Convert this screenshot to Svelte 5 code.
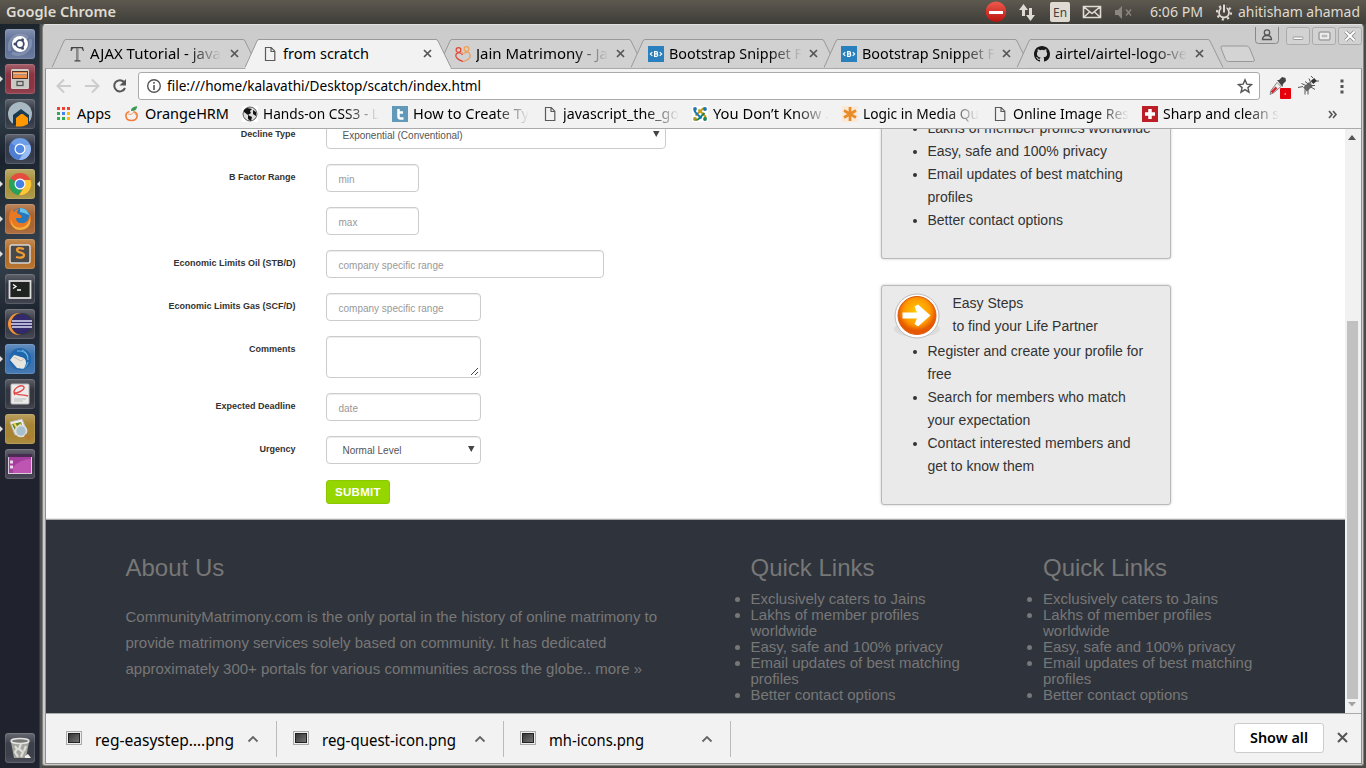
<script>
  const launcher = [
    { id: 'ubuntu', bg: '#62739a' },
    { id: 'files', bg: '#8b3442', run: true },
    { id: 'house', bg: '#343a46' },
    { id: 'chromium', bg: '#343a49' },
    { id: 'chrome', bg: '#a8943f', run: true, active: true },
    { id: 'firefox', bg: '#a86432', run: true },
    { id: 'sublime', bg: '#b36d27', run: true },
    { id: 'terminal', bg: '#343843' },
    { id: 'eclipse', bg: '#3a3d49' },
    { id: 'thunderbird', bg: '#3b71ae', run: true },
    { id: 'document', bg: '#343640' },
    { id: 'viewer', bg: '#a68434', run: true },
    { id: 'windowapp', bg: '#3c3b4b' }
  ];
  const tabs = [
    { icon: 'tee', text: 'AJAX Tutorial - java', w: 131, fade: true },
    { icon: 'page', text: 'from scratch', w: 86, active: true },
    { icon: 'hearts', text: 'Jain Matrimony - Ja', w: 132, fade: true },
    { icon: 'snippet', text: 'Bootstrap Snippet F', w: 133, fade: true },
    { icon: 'snippet', text: 'Bootstrap Snippet F', w: 133, fade: true },
    { icon: 'github', text: 'airtel/airtel-logo-ve', w: 132, fade: true }
  ];
  const bookmarks = [
    { icon: 'apps', text: 'Apps', w: 34 },
    { icon: 'orange', text: 'OrangeHRM', w: 84 },
    { icon: 'globe', text: 'Hands-on CSS3 - L', w: 116, fade: true },
    { icon: 'tumble', text: 'How to Create Ty', w: 116, fade: true },
    { icon: 'page', text: 'javascript_the_go', w: 116, fade: true },
    { icon: 'joomla', text: 'You Don’t Know .', w: 116, fade: true },
    { icon: 'star', text: 'Logic in Media Qu', w: 116, fade: true },
    { icon: 'page', text: 'Online Image Res', w: 116, fade: true },
    { icon: 'cross', text: 'Sharp and clean s', w: 116, fade: true }
  ];
  const downloads = [
    { text: 'reg-easystep….png', w: 139 },
    { text: 'reg-quest-icon.png', w: 134 },
    { text: 'mh-icons.png', w: 95 }
  ];
  const fields = [
    { label: 'Decline Type', kind: 'select', value: 'Exponential (Conventional)', w: 340 },
    { label: 'B Factor Range', value: 'min', w: 93 },
    { label: '', value: 'max', w: 93 },
    { label: 'Economic Limits Oil (STB/D)', value: 'company specific range', w: 278 },
    { label: 'Economic Limits Gas (SCF/D)', value: 'company specific range', w: 155 },
    { label: 'Comments', kind: 'area', w: 155 },
    { label: 'Expected Deadline', value: 'date', w: 155 },
    { label: 'Urgency', kind: 'select', value: 'Normal Level', w: 155 }
  ];
  const quick = ['Exclusively caters to Jains', 'Lakhs of member profiles worldwide', 'Easy, safe and 100% privacy', 'Email updates of best matching profiles', 'Better contact options'];
</script>

{#snippet label(text, w, size = 14.4, fade = false, bold = false)}
  <svg class="fit" class:fade class:bold width={w} height="20" font-size={size}>
    <text x="0" y="15" textLength={w} lengthAdjust="spacingAndGlyphs">{text}</text>
  </svg>
{/snippet}

{#snippet close()}
  <svg class="close" width="9" height="9" viewBox="0 0 9 9"><path d="M1 1 8 8M8 1 1 8" stroke="#555" stroke-width="1.7" /></svg>
{/snippet}

{#snippet icon(id)}
  <svg class="ico" width="16" height="16" viewBox="0 0 16 16" fill="none">
    {#if id === 'tee'}
      <path d="M2 1h12l1 4h-1l-1.5-2.8H9.3V14l2.200.6v.9h-6v-.9l2-.6V2.200H4L2.500 5h-1z" fill="#444" />
      <path d="M8.800 2v12.500" stroke="#aaa" />
    {:else if id === 'page'}
      <path d="M3.500 1.500h5.700l3.600 3.700v9.300H3.500zM9 1.700v3.800h3.800" stroke="#5a5a5a" stroke-width="1.200" />
    {:else if id === 'hearts'}
      <circle cx="3.500" cy="4" r="2.400" stroke="#e5432e" stroke-width="1.200" /><circle cx="11.500" cy="3" r="2.400" stroke="#f5a04c" stroke-width="1.200" />
      <path d="M7.500 9C5 5 0 7 1 10.500c1 3 4 4 7 5" stroke="#e5432e" stroke-width="1.200" />
      <path d="M6 6.500c3 2 4 0 6-.5 3 0 4 4 2 6.500-1 1.500-4 2.500-6 3" stroke="#f5964c" stroke-width="1.200" />
    {:else if id === 'snippet'}
      <rect width="16" height="16" fill="#2a80bd" />
      <path d="M4.300 6.200 2.300 8l2 1.800M11.700 6.200l2 1.800-2 1.800" stroke="#fff" stroke-width="1.100" />
      <path d="M6.600 5.600h1.700q1.200 0 1.200 1.100T8.300 7.900H6.600h1.900q1.300 0 1.300 1.200t-1.300 1.300H6.600z" stroke="#fff" stroke-width="1.200" />
    {:else if id === 'github'}
      <path fill="#191717" d="M8 0C3.580 0 0 3.580 0 8c0 3.540 2.290 6.530 5.470 7.590.4.070.550-.170.550-.380v-1.490c-2.010.370-2.530-.490-2.690-.940-.090-.230-.480-.940-.820-1.130-.280-.150-.680-.520-.010-.530.630-.010 1.080.580 1.230.820.720 1.210 1.870.870 2.330.660.070-.520.280-.870.510-1.070-1.780-.200-3.640-.890-3.640-3.950 0-.870.310-1.590.820-2.150-.080-.200-.360-1.020.080-2.120 0 0 .670-.210 2.200.820a7.600 7.600 0 0 1 4 0c1.530-1.040 2.200-.820 2.200-.820.440 1.100.160 1.920.080 2.120.510.560.820 1.270.820 2.150 0 3.070-1.870 3.750-3.650 3.950.290.250.540.730.540 1.480v2.200c0 .210.150.460.550.380A8 8 0 0 0 16 8c0-4.420-3.580-8-8-8z" />
    {:else if id === 'apps'}
      {#each [0, 1, 2] as r}
        {#each [0, 1, 2] as c}
          <rect x={1 + c * 5} y={1 + r * 5} width="3" height="3" fill={[['#ea4335', '#ea4335', '#ea4335'], ['#34a853', '#4285f4', '#fbbc05'], ['#34a853', '#34a853', '#fbbc05']][r][c]} />
        {/each}
      {/each}
    {:else if id === 'orange'}
      <path d="M5.500 5.500C0 7 1 14.500 7.500 14.500S15 7 9.500 5.800" stroke="#f27c36" stroke-width="1.600" /><path d="M4 8q3 2 6-2l2 3" stroke="#f6a36b" />
      <path d="M7 5C7 2 9 1 13 0c0 4-2 5-6 5z" fill="#3a9a55" />
    {:else if id === 'globe'}
      <rect width="16" height="16" fill="#fff" /><circle cx="8" cy="8" r="7" fill="#ddd" stroke="#555" />
      <path d="m2 4 3-2 5 1-2 2 1 2-3 2-4-3zm9 0 3 2v4l-3-2zM6 9l4 2-1 4-3-2z" fill="#111" />
    {:else if id === 'tumble'}
      <rect width="16" height="16" fill="#6299b8" /><path d="M6.500 3v7.500q0 2 2 2H11.500M6.500 6.500H11" stroke="#fff" stroke-width="2.500" />
    {:else if id === 'joomla'}
      <rect width="16" height="16" fill="#fff" />
      <g stroke-width="1.900"><path d="M3.500 9.500 10 3.500q2-2 3.500-.5" stroke="#b69a18" /><path d="m6.500 3.500 6 6q2 2 .5 3.500" stroke="#c89c12" /><path d="m12.500 7-6 6q-2 1.500-3.500 0" stroke="#17845b" /><path d="m9.500 12.500-6-6Q2 4.500 3 3" stroke="#1a75b8" /></g>
      <circle cx="3" cy="3" r="1.900" fill="#2477ad" /><circle cx="13" cy="3" r="1.900" fill="#1a75b8" /><circle cx="3" cy="13" r="1.900" fill="#ad9421" /><circle cx="13" cy="13" r="1.900" fill="#17845b" />
    {:else if id === 'star'}
      <rect width="16" height="16" fill="#fbe9d8" /><path d="M8 1v14M2 4.500l12 7M14 4.500l-12 7" stroke="#e98b27" stroke-width="2.700" />
    {:else if id === 'cross'}
      <rect width="16" height="16" fill="#bb1e27" /><path d="M8 3v10M3 8h10" stroke="#fff" stroke-width="3.500" />
    {/if}
  </svg>
{/snippet}

{#snippet tile(id)}
  <svg width="26" height="26" viewBox="0 0 26 26" fill="none">
    {#if id === 'ubuntu'}
      <path d="M3 20C-1 8 12-1 21 7M5 22c12 5 21-5 18-14" stroke="#9ba7c0" stroke-width="3" opacity=".5" />
      <circle cx="13" cy="13" r="8" fill="#fff" /><circle cx="13" cy="13" r="3.800" stroke="#3e4b6b" stroke-width="1.800" />
      <circle cx="8" cy="13" r="1.500" fill="#3e4b6b" /><circle cx="15.500" cy="8.700" r="1.500" fill="#3e4b6b" /><circle cx="15.500" cy="17.300" r="1.500" fill="#3e4b6b" />
    {:else if id === 'files'}
      <rect x="4" y="3" width="18" height="20" rx="1.500" fill="#d2d0cc" /><path d="M5 5h16v8H5z" fill="#553425" /><path d="M6 6h14v2H6zM6 9h14v3H6z" fill="#ed8b4b" /><path d="M6 8h14" stroke="#f3e9dd" />
      <path d="M4 13h18v9H4z" fill="#c9c9c5" /><rect x="10" y="15.500" width="6" height="4" stroke="#555" stroke-width="1.300" />
    {:else if id === 'house'}
      <circle cx="13" cy="13" r="12" fill="#a8b9c3" /><path d="M6 24V14l8-6 8 6v8l-4 3z" fill="#183a54" /><path d="M9 25.500V17l5-4h2l5 4v6q-4 3-12 2.500z" fill="#ff9800" />
    {:else if id === 'chromium'}
      <circle cx="13" cy="13" r="11" fill="#6f9ee8" /><path d="M13 13 4 7A11 11 0 0 0 12 24l5-9z" fill="#4f7ed1" /><path d="m13 13 5 3-6 8a11 11 0 0 0 11-15H13z" fill="#98bcf4" /><circle cx="13" cy="13" r="5.500" fill="#fff" /><circle cx="13" cy="13" r="4.300" fill="#528ae3" />
    {:else if id === 'chrome'}
      <circle cx="13" cy="13" r="11" fill="#e34c3e" /><path d="M3.500 7.500A11 11 0 0 0 12 24l5-9-4-2z" fill="#25a35a" /><path d="M12 24A11 11 0 0 0 23.500 9H13l5 6z" fill="#fcc934" /><circle cx="13" cy="13" r="5.500" fill="#fff" /><circle cx="13" cy="13" r="4.300" fill="#4780e4" />
    {:else if id === 'firefox'}
      <circle cx="13.500" cy="12" r="10" fill="#2878be" /><path d="M13 2c5 0 8 3 9 7l-5-2-4-1z" fill="#68c3eb" />
      <path d="M5 3c-6 8-3 20 8 20 7 0 11-5 11-12l-2-4c1 7-3 11-8 10-3 0-5-2-5-5h5l1-2-5-3c0-2 1-3 2-4-2 0-4 1-5 3z" fill="#e87821" /><path d="M4 13c1 7 6 10 12 8 4-1 6-5 7-9 2 8-4 12-10 12S3 19 4 13z" fill="#f5b13c" />
    {:else if id === 'sublime'}
      <rect x="3" y="4" width="20" height="18" rx="2" fill="#494949" stroke="#d5d5d5" stroke-width="1.500" /><path d="M17 8q-7-2-7 1c0 3 7 2 7 5s-4 3-8 2" stroke="#f29b32" stroke-width="2.300" />
    {:else if id === 'terminal'}
      <rect x="2.500" y="5" width="21" height="17" fill="#202420" stroke="#ddd" stroke-width="1.800" /><path d="m6 8.500 3 2-3 2M10 14h4" stroke="#fff" stroke-width="1.300" />
    {:else if id === 'eclipse'}
      <circle cx="12" cy="13" r="11" fill="#f2913a" /><circle cx="15" cy="13" r="11" fill="#343745" /><circle cx="14.500" cy="13" r="9.800" fill="#33296d" /><path d="M5 10h20M4 13h21M5 16h20" stroke="#e0e0f2" stroke-width="1.600" />
    {:else if id === 'thunderbird'}
      <circle cx="13" cy="13" r="11" fill="#2568ae" /><path d="M3 14 7 9l11 2 2 5-3 7-7-1z" fill="#e8e5df" /><path d="m7 11 7 4 4-3" stroke="#c5bfb8" /><path d="M5 10C7 1 22 1 24 12c1 6-4 11-9 12 5-4 5-9 2-12l-6-2-3-2z" fill="#1f67ad" /><path d="M10 5q8-1 11 6M15 4q6 2 6 10M21 16q-1 5-5 7" stroke="#75b6e6" />
    {:else if id === 'document'}
      <rect x="4" y="3" width="18" height="20" rx="1" fill="#ecebea" stroke="#bbb" /><path d="M8 14C4 8 15 2 17 6c1 3-9 8-10 5 2 4 9 2 14 4" stroke="#e14b4b" stroke-width="1.400" /><path d="M7 18h12M7 20h9" stroke="#bbb" />
    {:else if id === 'viewer'}
      <path d="m3 6 12-3 5 12-12 4z" fill="#eee" stroke="#bbb" /><path d="m5 8 9-2 3 8-8 3z" fill="#64892c" /><path d="m7 7 3 5 4-4" stroke="#f4d550" stroke-width="2" /><circle cx="14" cy="15" r="5.500" fill="#a8c0cc" stroke="#ddd" stroke-width="1.700" /><path d="m18 19 5 4" stroke="#b5762f" stroke-width="3" />
    {:else if id === 'windowapp'}
      <rect x="1.500" y="3.500" width="23" height="19" fill="#a43d9d" stroke="#d9cddb" /><path d="M1 3h24v3H1z" fill="#492d50" /><path d="M6 22V16Q14 8 24 8v14z" fill="#c95fba" opacity=".7" /><path d="M3 9.500h3v3H3zM3 14.500h3v3H3z" fill="#f3d8ed" />
    {:else}
      <path d="m4 7 3 16h12l3-16z" fill="#a5a5a0" /><ellipse cx="13" cy="6" rx="9" ry="2.500" fill="#777" stroke="#e3e3df" stroke-width="1.500" />
      <path d="m8 11 2 3-2 3 3 5m3-13-2 5 4 3-2 5M19 11l-2 5" stroke="#deded8" stroke-width="2.200" /><path d="m18 21 3-2 3 4h-6z" fill="#eee" />
    {/if}
  </svg>
{/snippet}

<div class="desktop">
  <header class="panel">
    {@render label('Google Chrome', 110, 13.8, false, true)}
    <div class="tray">
      <svg width="374" height="24" fill="none">
        <defs><linearGradient id="redsign" x2="0" y2="1"><stop stop-color="#ee5a4e" /><stop offset="1" stop-color="#b9130e" /></linearGradient></defs>
        <circle cx="10" cy="11.700" r="10.300" fill="url(#redsign)" /><path d="M3 11h14v3H3z" fill="#fff" />
        <path d="M36 8h3v8h-3zM43 8h3v8h-3z" fill="#dfdbd2" /><path d="m37.500 4-4.500 6h9zM44.500 21l-4.500-6h9z" fill="#dfdbd2" />
        <rect x="64" y="2" width="20" height="20" rx="2" fill="#dfdbd2" />
        <text x="67" y="17" font-size="13" fill="#45423b" textLength="14" lengthAdjust="spacingAndGlyphs">En</text>
        <path d="M97.500 6.500h17v11h-17zm0 0 8.500 7 8.500-7M97.500 17.500l6-5.500m11 5.500-6-5.500" stroke="#dfdbd2" stroke-width="1.600" />
        <path d="M129 10h3l4-4v13l-4-4h-3z" fill="#8b877e" /><path d="m140 9.500 5 6m0-6-5 6" stroke="#8b877e" stroke-width="1.400" />
        <text x="164" y="17" font-size="13.500" fill="#dfdbd2" textLength="53" lengthAdjust="spacingAndGlyphs">6:06 PM</text>
        <circle cx="238" cy="12.500" r="5" stroke="#dfdbd2" stroke-width="1.800" /><circle cx="238" cy="12.500" r="7" stroke="#dfdbd2" stroke-width="2.200" stroke-dasharray="2.200 3.298" /><path d="M238 3v9" stroke="#4d4a43" stroke-width="5" /><path d="M238 4.500v8" stroke="#dfdbd2" stroke-width="2" />
        <text x="252" y="17" font-size="13.500" fill="#dfdbd2" textLength="122" lengthAdjust="spacingAndGlyphs">ahitisham ahamad</text>
      </svg>
    </div>
  </header>

  <div class="below">
    <aside class="launcher">
      {#each launcher as item}
        <div class="slot">
          <i class="mark" class:on={item.run}></i>
          <div class="tile" style="background-color:{item.bg}">{@render tile(item.id)}</div>
          <i class="mark right" class:on={item.active}></i>
        </div>
      {/each}
      <div class="slot trash"><i class="mark"></i><div class="tile">{@render tile('trash')}</div></div>
    </aside>

    <div class="window">
      <div class="tabstrip">
        {#each tabs as t}
          <div class="tab" class:active={t.active}>
            <svg class="shape" width="208" height="30" viewBox="0 0 208 30">
              <path d="M0 28.500 12 2q.5-1.500 2-1.500h177q1.500 0 2 1.500l13 26.500" fill={t.active ? '#f2f2f2' : '#d1d1d1'} stroke="#999" />
              {#if t.active}<path d="M.5 29h205" stroke="#f2f2f2" stroke-width="2" />{/if}
            </svg>
            {@render icon(t.icon)}
            <div class="title">{@render label(t.text, t.w, 14.4, t.fade)}</div>
            {@render close()}
          </div>
        {/each}
        <svg class="newtab" width="36" height="18"><path d="M2.500 1h24q2 0 3 2l5 12q0 1.500-2 1.500h-24q-2 0-3-2L1 3Q.5 1 2.500 1z" fill="#d4d4d4" stroke="#999" /></svg>
        <svg class="controls" width="108" height="20" fill="none" stroke="#aaa">
          <path d="M1.500 0v13.500q0 3 3 3h17q3 0 3-3V0" stroke="#888" /><circle cx="13" cy="5.500" r="2.700" stroke="#555" stroke-width="1.300" /><path d="M8.500 12.500q0-4 4.500-4t4.500 4z" stroke="#555" stroke-width="1.300" />
          <g fill="#d2d2d2"><rect x="32.500" y=".5" width="23" height="17" rx="2" /><rect x="58.500" y=".5" width="23" height="17" rx="2" /><rect x="84.500" y=".5" width="23" height="17" rx="2" /></g>
          <rect x="39" y="10" width="10" height="2.500" rx="1" fill="#fff" stroke="#999" /><rect x="65" y="5" width="11" height="8" rx="1" fill="#ddd" stroke="#888" /><rect x="67" y="7" width="7" height="4" fill="#bbb" stroke="#fff" /><path d="m91.500 4.500 9 9m0-9-9 9" stroke="#888" stroke-width="3.500" /><path d="m91.500 4.500 9 9m0-9-9 9" stroke="#fff" stroke-width="2" />
        </svg>
      </div>

      <div class="content">
        <div class="toolbar">
          <svg width="78" height="24" fill="none"><g stroke="#ccc" stroke-width="2"><path d="M15 12H2m6-6.500L1.500 12 8 18.500M29 12h13m-6-6.500 6.500 6.500-6.500 6.500" /></g><path d="M68 8A5.600 5.600 0 1 0 69 14" stroke="#555" stroke-width="2" /><path d="M70 5v6.500h-6.500z" fill="#555" /></svg>
          <div class="omnibox">
            <svg width="16" height="16" fill="none" stroke="#555"><circle cx="8" cy="8" r="6.300" stroke-width="1.400" /><path d="M8 7v5M8 4v1.800" stroke-width="1.600" /></svg>
            {@render label('file:///home/kalavathi/Desktop/scatch/index.html', 314, 14.4)}
            <svg class="fav" width="16" height="16" viewBox="0 0 16 16" fill="none"><path d="m8 1.800 1.800 4.300 4.700.4-3.600 3.100 1.100 4.600L8 11.700l-4 2.500 1.100-4.600-3.600-3.100 4.700-.4z" stroke="#555" stroke-width="1.400" /></svg>
          </div>
          <svg class="ext" width="86" height="28" fill="none">
            <path d="m10 8.500 4 4-7 6-4 2 1-4z" fill="#eee" stroke="#888" /><path d="m4.500 18.500 5-5" stroke="#d12b35" stroke-width="2.500" /><path d="m10 6 2 0 3-3 3.500 1 .5 3-3 3-.5 3z" fill="#444" />
            <rect x="13" y="14" width="11" height="11" rx="1" fill="#e6000c" /><path d="M17.500 20h1.500" stroke="#fff" />
            <path d="m38 15.500 6-5.500" stroke="#666" stroke-width="5.500" /><path d="m34.500 9.500 4.500 2m-1-4 4 3m0-6 2 5m-6 6v5m3-6v6m2-8 5 3m-5-4h5m-12 1-5 1" stroke="#555" /><path d="m45 8.500 3.500-3" stroke="#333" stroke-width="4" /><path d="m46 4-2-2m5 5h3" stroke="#555" />
            <path d="M75 5.500v3M75 11v3M75 16.500v3" stroke="#555" stroke-width="3" />
          </svg>
        </div>
        <div class="bookmarks">
          {#each bookmarks as b}
            <div class="bm">{@render icon(b.icon)}{@render label(b.text, b.w, 14.4, b.fade)}</div>
          {/each}
          <svg class="more" width="10" height="9" fill="none"><path d="m1 1 3 3.500L1 8m4-7 3 3.500L5 8" stroke="#555" stroke-width="1.600" /></svg>
        </div>

        <div class="view">
          <main class="page">
            <div class="upper">
              <form class="form">
                {#each fields as f}
                  <div class="row">
                    <span class="lbl">{f.label}</span>
                    <div class="ctl {f.kind ?? 'input'}" style="width:{f.w}px">
                      {#if f.kind === 'area'}
                        <svg width="9" height="9"><path d="M1 8 8 1M5 8l3-3" stroke="#444" /></svg>
                      {:else}
                        <span>{f.value}</span>
                      {/if}
                      {#if f.kind === 'select'}<svg width="7" height="7"><path d="M0 0h6.500L3.250 6z" fill="#444" /></svg>{/if}
                    </div>
                  </div>
                {/each}
                <div class="row"><span class="lbl"></span><button type="button">SUBMIT</button></div>
              </form>
              <div class="side">
                <section class="card first">
                  <ul><li>Lakhs of member profiles worldwide</li><li>Easy, safe and 100% privacy</li><li>Email updates of best matching profiles</li><li>Better contact options</li></ul>
                </section>
                <section class="card">
                  <div class="head">
                    <svg width="48" height="48">
                      <defs><radialGradient id="ball" cy=".4"><stop stop-color="#ffd000" /><stop offset=".7" stop-color="#ff9800" /><stop offset="1" stop-color="#e65800" /></radialGradient></defs>
                      <ellipse cx="24" cy="37" rx="23" ry="8" fill="#dcdcdc" /><circle cx="24" cy="24" r="22" fill="#fff" stroke="#bbb" /><circle cx="24" cy="23.500" r="19" fill="url(#ball)" stroke="#dd5b10" /><path d="M9.500 20.500H24l-2.500-6 3.500-2 12.500 11-12.500 11-3.500-2.500 2.500-5.500H9.500z" fill="#fff" />
                    </svg>
                    <p>Easy Steps<br />to find your Life Partner</p>
                  </div>
                  <ul><li>Register and create your profile for free</li><li>Search for members who match your expectation</li><li>Contact interested members and get to know them</li></ul>
                </section>
              </div>
            </div>
            <footer>
              <div class="about"><h3>About Us</h3><p>CommunityMatrimony.com is the only portal in the history of online matrimony to provide matrimony services solely based on community. It has dedicated approximately 300+ portals for various communities across the globe.. more »</p></div>
              {#each [0, 1] as n}
                <div class="quick"><h3>Quick Links</h3><ul>{#each quick as q}<li>{q}</li>{/each}</ul></div>
              {/each}
            </footer>
          </main>
          <div class="scroll"><svg width="8" height="5"><path d="M0 5 4 0l4 5z" fill="#555" /></svg><i></i><svg width="8" height="5"><path d="M0 0h8L4 4.500z" fill="#a3a3a3" /></svg></div>
        </div>

        <div class="shelf">
          {#each downloads as d}
            <div class="dl">
              <svg width="16" height="14"><defs><linearGradient id="thumb" x2="1" y2="1"><stop stop-color="#333" /><stop offset="1" stop-color="#777" /></linearGradient></defs><rect x=".5" y=".5" width="15" height="13" fill="#eee" stroke="#aaa" /><rect x="2.500" y="2.500" width="11" height="9" fill="url(#thumb)" stroke="#222" /></svg>
              {@render label(d.text, d.w, 16)}
              <svg class="chev" width="12" height="8" fill="none"><path d="m1.500 6.500 4.500-4.500 4.500 4.500" stroke="#666" stroke-width="1.800" /></svg>
            </div>
          {/each}
          <div class="showall">{@render label('Show all', 58, 14.4, false, true)}</div>
          <svg width="11" height="11"><path d="m1 1 9 9m0-9-9 9" stroke="#555" stroke-width="2" /></svg>
        </div>
      </div>
    </div>
  </div>
</div>

<style>
  :global(body) { overflow: hidden; }
  * { box-sizing: border-box; }
  svg { display: block; flex: none; }
  .desktop { width: 1366px; height: 768px; display: flex; flex-direction: column; font-family: 'Liberation Sans', Arial, sans-serif; background: #4a4946; }
  .fit, .tray { font-family: 'Noto Sans', 'Open Sans', sans-serif; }
  .fit { fill: #000; overflow: visible; }
  .fit.bold { font-weight: 600; }
  .fit.fade { -webkit-mask-image: linear-gradient(90deg, #000 calc(100% - 34px), transparent); mask-image: linear-gradient(90deg, #000 calc(100% - 34px), transparent); }
  .panel { height: 24px; flex: none; display: flex; align-items: center; justify-content: space-between; padding: 0 6px; background: linear-gradient(#5c594d, #5a564d 10%, #3e3d38); }
  .panel .fit { fill: #dfdbd2; margin-top: -1px; }
  .below { height: 744px; display: flex; }
  .launcher { width: 42px; flex: none; display: flex; flex-direction: column; padding-top: 2px; background: linear-gradient(90deg, transparent 39px, #41505e 40px, #57534c 41px), linear-gradient(165deg, #1a222b, #303d49 12%, #1a232d 18%, #34414c 31%, #1b222d 40%, #27323f 46%, #20222d 57%, #20222d 100%); }
  .slot { height: 35px; display: flex; align-items: center; flex: none; }
  .tile { width: 30px; height: 30px; border-radius: 3px; display: grid; place-items: center; background-image: linear-gradient(rgba(255, 255, 255, .22), transparent 35%, transparent 75%, rgba(255, 255, 255, .08)); box-shadow: inset 0 0 0 1px rgba(255, 255, 255, .12); }
  .mark { width: 5px; height: 6px; border: solid transparent; border-width: 3px 2px 3px 3px; }
  .mark.on { border-left-color: #ddd; }
  .mark.right { width: 3px; margin-left: 2px; border-width: 3px 3px 3px 0; }
  .mark.right.on { border-right-color: #ddd; }
  .trash { margin-top: auto; height: 41px; }
  .trash .tile { background-color: #3d404b; }
  .window { width: 1322px; height: 742px; display: flex; flex-direction: column; background: #ccc; border: 1px solid #85827d; border-top-color: #e2e2e2; border-radius: 4px 4px 3px 3px; padding: 0 2px 2px; }
  .tabstrip { height: 43px; flex: none; display: flex; padding: 14px 0 0 7px; }
  .tab { width: 193px; height: 29px; flex: none; display: grid; grid-template-columns: 16px 135px auto; column-gap: 5px; align-items: center; justify-content: start; padding-left: 17px; position: relative; }
  .tab > .ico, .title, .close { position: relative; }
  .shape { position: absolute; left: 0; top: 0; }
  .tab.active { z-index: 2; }
  .newtab { margin: 6px 0 0 10px; }
  .controls { margin: -12px 0 0 -2px; }
  .content { height: 696px; display: flex; flex-direction: column; background: #f2f2f2; border: 1px solid #909090; border-top-color: #aaa; margin-right: -1px; }
  .toolbar { height: 33px; flex: none; display: flex; align-items: flex-start; padding: 3px 0 0 10px; }
  .toolbar > svg:first-child { margin: 2px 5px 0 0; }
  .omnibox { width: 1122px; height: 28px; display: flex; align-items: center; gap: 5px; padding: 0 6px 0 7px; margin-left: -1px; background: #fff; border: 1px solid #aaa; border-radius: 3px; }
  .fav { margin-left: auto; }
  .ext { margin: 2px 0 0 7px; }
  .bookmarks { height: 27px; flex: none; display: flex; align-items: center; padding: 0 23px 2px 10px; gap: 13px; border-bottom: 1px solid #aaa; }
  .bm { display: flex; align-items: center; gap: 5px; }
  .more { margin-left: auto; }
  .view { height: 584px; flex: none; display: flex; background: #f1f1f1; }
  .page { width: 1299px; height: 584px; display: flex; flex-direction: column; overflow: hidden; background: #fff; }
  .upper { height: 390px; flex: none; display: flex; border-bottom: 1px solid #e8e8e8; }
  .form { width: 835px; margin-top: -8px; display: flex; flex-direction: column; gap: 15px; }
  .row { display: flex; align-items: flex-start; }
  .lbl { width: 249.500px; margin-right: 30.500px; font: bold 9px/26px 'Liberation Sans', Arial, sans-serif; color: #333; text-align: right; }
  .ctl { height: 28px; display: flex; align-items: center; padding: 2px 11px 0 11.500px; border: 1px solid #ccc; border-radius: 4px; box-shadow: inset 0 1px 1px rgba(0, 0, 0, .075); font-size: 10px; color: #999; background: #fff; }
  .select { justify-content: space-between; padding: 1px 5px 0 15.500px; color: #555; }
  .select svg { margin-top: -2px; }
  .area { height: 42px; align-items: flex-end; justify-content: flex-end; padding: 0 1px 1px; }
  button { width: 64px; height: 24px; margin-top: 1px; padding: 0; border: 1px solid #8bc800; border-radius: 3px; background: #96d600; color: #fff; font: bold 11.500px 'Liberation Sans', Arial, sans-serif; letter-spacing: .3px; }
  .side { width: 290px; flex: none; }
  .card { height: 220px; border: 1px solid #b9b9b9; border-radius: 3px; background: #eaeaea; box-shadow: 0 0 3px #ccc; color: #333; font-size: 14px; line-height: 23px; }
  .card.first { height: 142px; margin: -12px 0 26px; border-top: 0; border-radius: 0 0 3px 3px; }
  ul, p, h3 { margin: 0; padding: 0; }
  .card ul { padding: 0 20px 0 45.500px; }
  .card.first ul { padding-right: 15px; }
  .card.first li:first-child { white-space: nowrap; }
  .head { display: flex; height: 54px; padding: 6px 0 0 11px; }
  .head p { margin-left: 11.500px; }
  footer { height: 194px; flex: none; display: flex; background: #2f333b; border-top: 1px solid #aaa; padding: 35px 0 0 79.500px; color: #777; font-size: 15px; }
  h3 { font-size: 24px; line-height: 26px; font-weight: 400; }
  .about { width: 546px; margin-right: 39px; }
  .about p { line-height: 26px; margin-top: 23px; }
  .quick { width: 253px; margin-right: 39.500px; padding-left: 40px; }
  .quick ul { margin-top: 10px; line-height: 16px; }
  .scroll { width: 16px; display: flex; flex-direction: column; align-items: center; padding: 6px 2px 6px 0; }
  .scroll i { width: 11px; height: 378px; margin-top: auto; margin-bottom: 3px; background: #c1c1c1; }
  .shelf { height: 50px; flex: none; display: flex; align-items: center; border-top: 1px solid #aaa; }
  .dl { width: 227px; height: 36px; display: flex; align-items: center; padding-left: 16px; border-right: 1px solid #bbb; }
  .dl:first-child { width: 231px; padding-left: 20px; }
  .dl > svg:first-child { margin: -2px 13px 0 0; }
  .dl .fit { margin-top: 5px; }
  .chev { margin: 0 17px 0 auto; }
  .showall { width: 90px; height: 30px; margin: -2px 13px 0 auto; display: grid; place-items: center; background: #fff; border: 1px solid #ccc; border-radius: 3px; }
  .shelf > svg { margin: -2px 13px 0 0; }
</style>
